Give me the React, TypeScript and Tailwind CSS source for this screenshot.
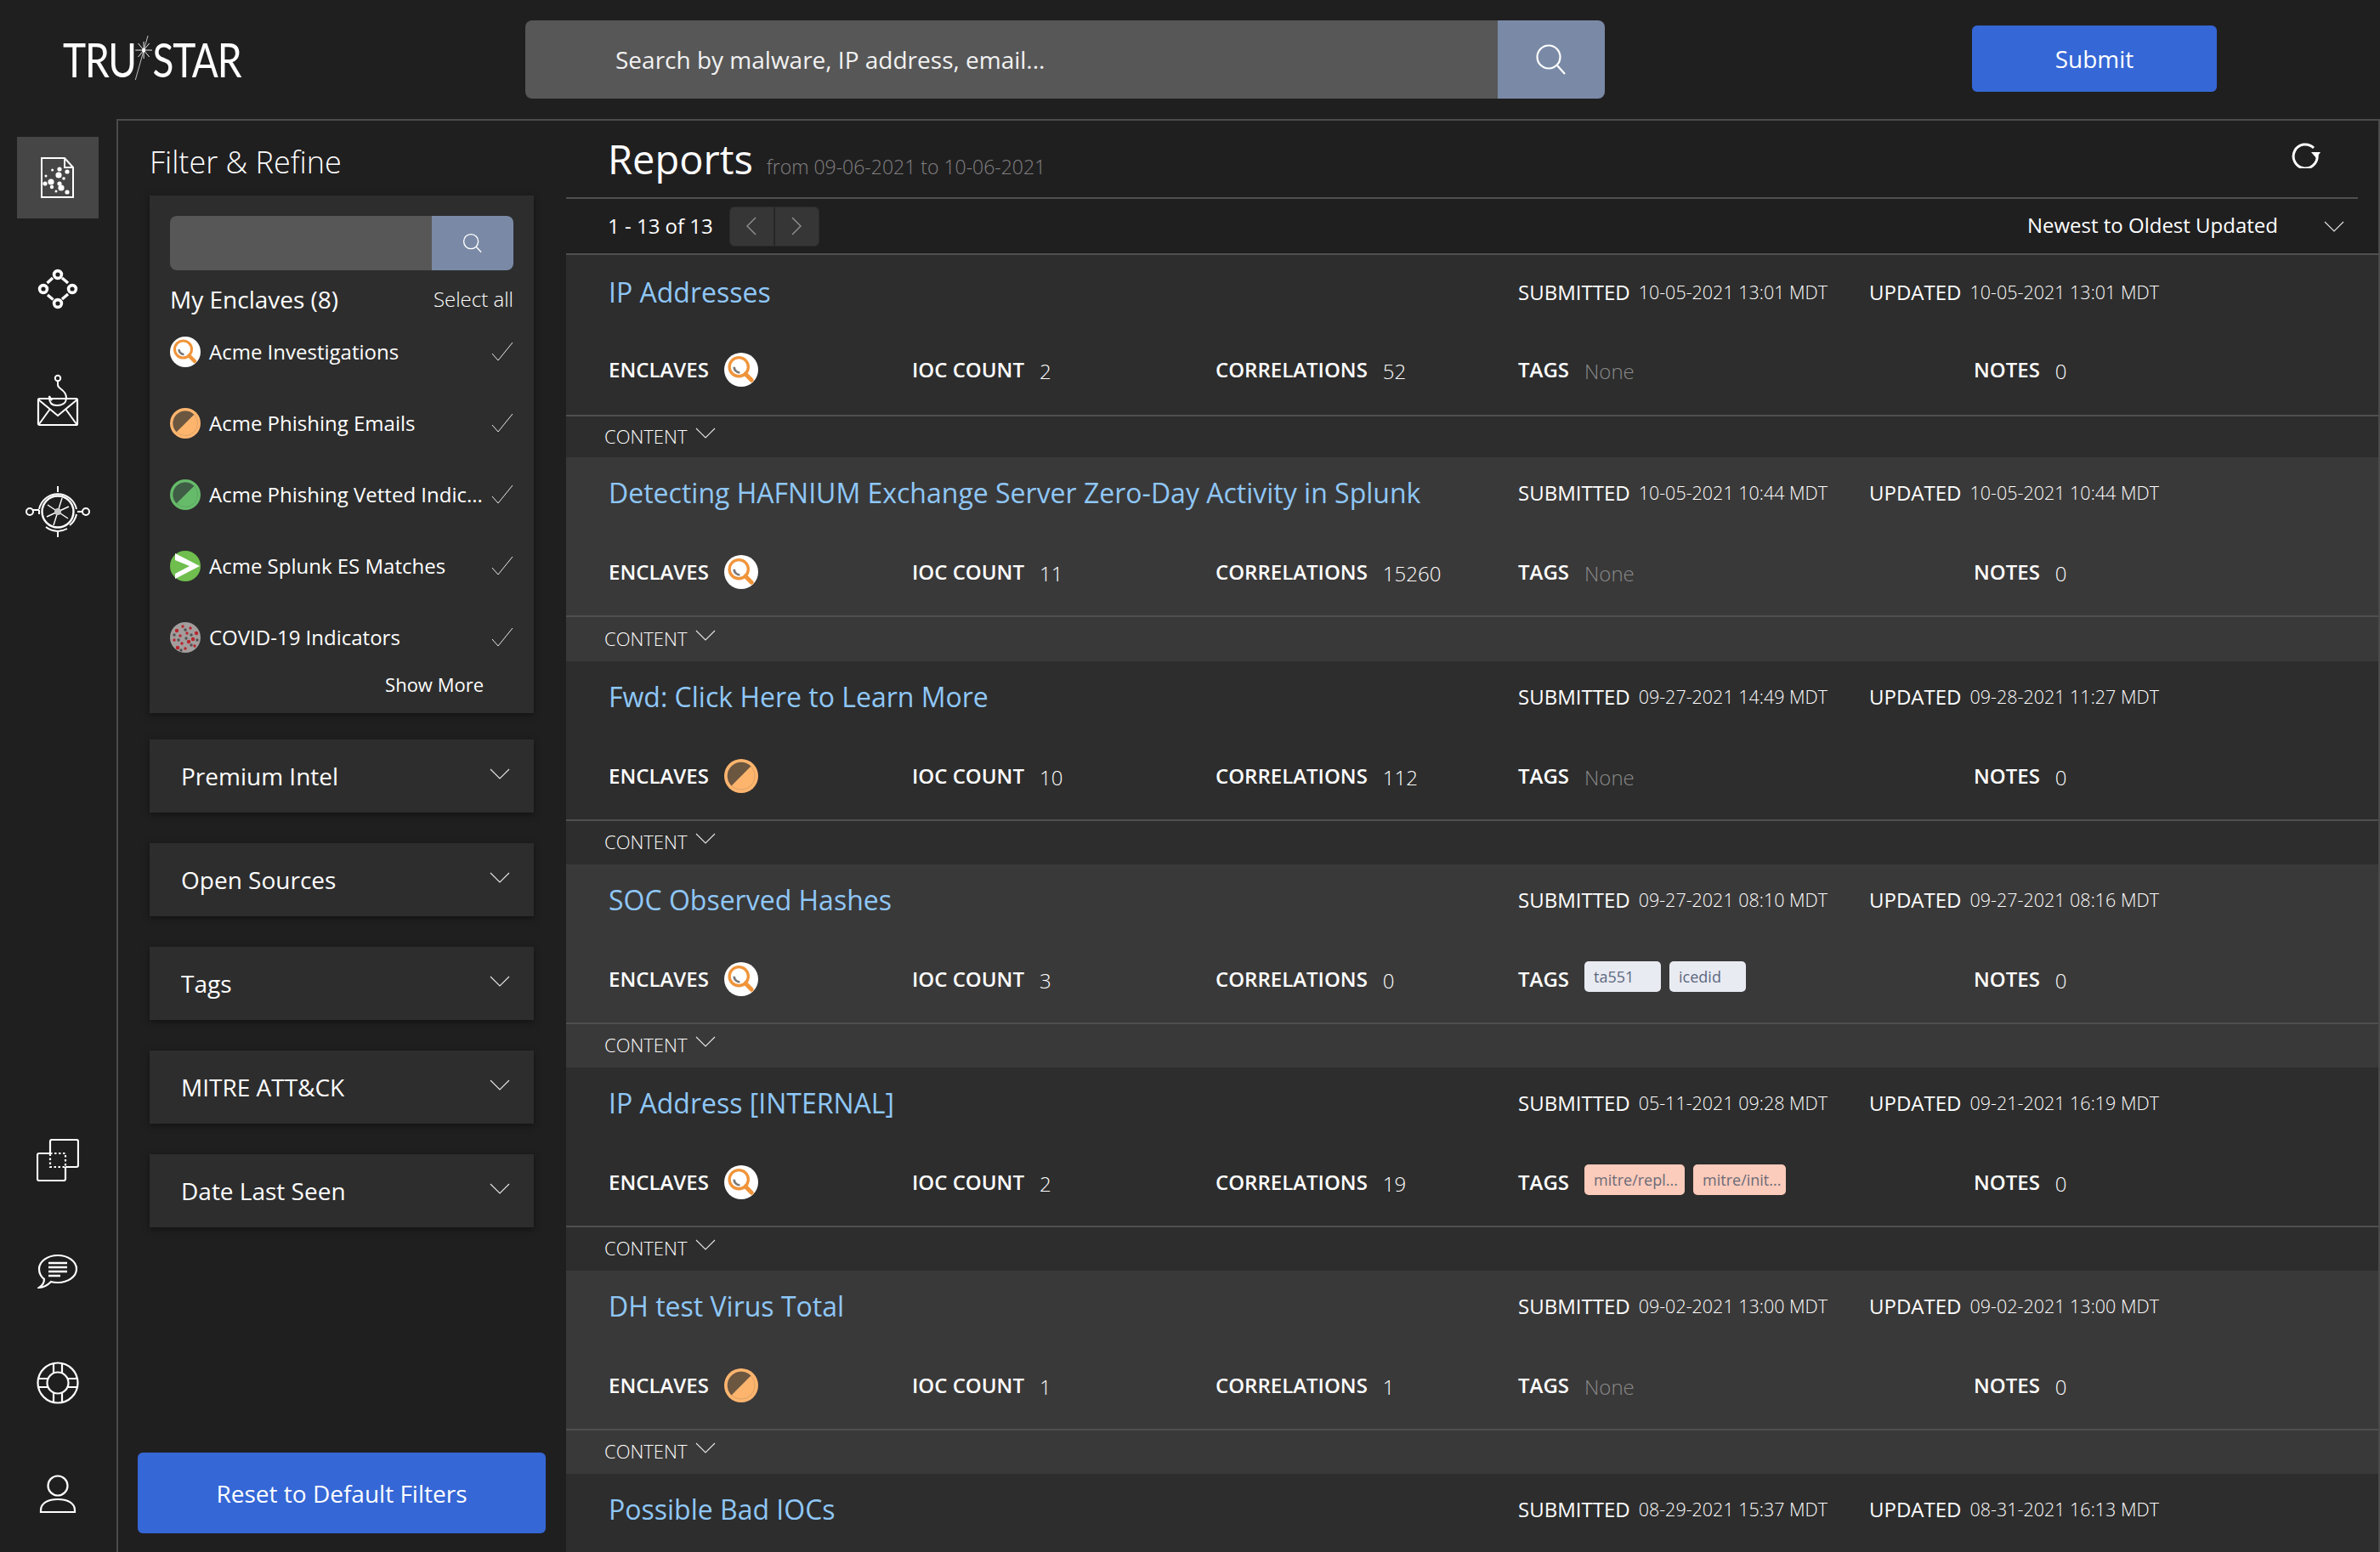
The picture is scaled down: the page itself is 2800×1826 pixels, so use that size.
import { ReactNode } from "react";

type EnclaveKind = "magnifier" | "orange" | "green" | "splunk" | "covid";

type Report = {
  title: string;
  submitted: string;
  updated: string;
  enclave?: EnclaveKind;
  iocCount?: string;
  correlations?: string;
  tags: { label: string; kind: "plain" | "mitre"; width: string }[];
};

const reports: Report[] = [
  { title: "IP Addresses", submitted: "10-05-2021 13:01 MDT", updated: "10-05-2021 13:01 MDT", enclave: "magnifier", iocCount: "2", correlations: "52", tags: [] },
  { title: "Detecting HAFNIUM Exchange Server Zero-Day Activity in Splunk", submitted: "10-05-2021 10:44 MDT", updated: "10-05-2021 10:44 MDT", enclave: "magnifier", iocCount: "11", correlations: "15260", tags: [] },
  { title: "Fwd: Click Here to Learn More", submitted: "09-27-2021 14:49 MDT", updated: "09-28-2021 11:27 MDT", enclave: "orange", iocCount: "10", correlations: "112", tags: [] },
  {
    title: "SOC Observed Hashes", submitted: "09-27-2021 08:10 MDT", updated: "09-27-2021 08:16 MDT", enclave: "magnifier", iocCount: "3", correlations: "0",
    tags: [{ label: "ta551", kind: "plain", width: "w-[90px]" }, { label: "icedid", kind: "plain", width: "w-[90px]" }],
  },
  {
    title: "IP Address [INTERNAL]", submitted: "05-11-2021 09:28 MDT", updated: "09-21-2021 16:19 MDT", enclave: "magnifier", iocCount: "2", correlations: "19",
    tags: [{ label: "mitre/repl...", kind: "mitre", width: "w-[118px]" }, { label: "mitre/init...", kind: "mitre", width: "w-[109px]" }],
  },
  { title: "DH test Virus Total", submitted: "09-02-2021 13:00 MDT", updated: "09-02-2021 13:00 MDT", enclave: "orange", iocCount: "1", correlations: "1", tags: [] },
  // last row runs off the bottom of the page, only its heading line is visible
  { title: "Possible Bad IOCs", submitted: "08-29-2021 15:37 MDT", updated: "08-31-2021 16:13 MDT", tags: [] },
];

const enclaves: { name: string; kind: EnclaveKind }[] = [
  { name: "Acme Investigations", kind: "magnifier" },
  { name: "Acme Phishing Emails", kind: "orange" },
  { name: "Acme Phishing Vetted Indic...", kind: "green" },
  { name: "Acme Splunk ES Matches", kind: "splunk" },
  { name: "COVID-19 Indicators", kind: "covid" },
];

const covidRed = [
  [8, 10], [15, 5], [24, 7], [31, 13], [12, 16], [20, 13], [27, 20], [5, 21], [14, 25], [22, 23], [18, 31], [29, 28], [9, 30],
];
const covidDark = [[18, 9], [10, 21], [25, 15], [19, 19], [25, 27], [13, 33], [5, 15], [32, 21]];

function EnclaveIcon({ kind, size }: { kind: EnclaveKind; size: number }) {
  if (kind === "magnifier") {
    return (
      <svg width={size} height={size} viewBox="0 0 36 36" className="shrink-0">
        <circle cx="18" cy="18" r="18" fill="#fff" />
        <circle cx="15.5" cy="15" r="10" fill="none" stroke="#f0943a" strokeWidth="3" />
        <path d="M10.500 15a6 6 0 0 0 6 6" fill="none" stroke="#77787a" strokeWidth="2.500" />
        <path d="M22.500 22.500l6.500 6.500" stroke="#f0943a" strokeWidth="4.500" strokeLinecap="round" />
      </svg>
    );
  }
  if (kind === "orange" || kind === "green") {
    const outer = kind === "orange" ? "#fdb56e" : "#66bb6a";
    const inner = kind === "orange" ? "#6b5640" : "#3f5c45";
    return (
      <svg width={size} height={size} viewBox="0 0 36 36" className="shrink-0">
        <circle cx="18" cy="18" r="18" fill={outer} />
        <circle cx="18" cy="18" r="14.500" fill="none" stroke={inner} strokeOpacity="0.4" strokeWidth="0.5" />
        <path d="M7.700 28.300A14.500 14.500 0 0 1 28.300 7.700Z" fill={inner} />
      </svg>
    );
  }
  if (kind === "splunk") {
    return (
      <svg width={size} height={size} viewBox="0 0 36 36" className="shrink-0">
        <circle cx="18" cy="18" r="18" fill="#6fbe4e" />
        <path d="M6 3l29 15-29 15v-6l17-9L6 11z" fill="#fff" />
      </svg>
    );
  }
  return (
    <svg width={size} height={size} viewBox="0 0 36 36" className="shrink-0">
      <circle cx="18" cy="18" r="18" fill="#a39d9d" />
      {covidDark.map(([x, y], i) => (
        <circle key={i} cx={x} cy={y} r="1.700" fill="#55504f" />
      ))}
      {covidRed.map(([x, y], i) => (
        <circle key={i} cx={x} cy={y} r={i % 3 === 0 ? 2.2 : 1.700} fill="#b9262c" />
      ))}
    </svg>
  );
}

function Chevron({ className }: { className?: string }) {
  return (
    <svg width="24" height="13" viewBox="0 0 24 13" fill="none" stroke="#e8e8e8" strokeWidth="1.1" className={className}>
      <path d="M1 1l11 11L23 1" />
    </svg>
  );
}

function SearchGlyph({ size }: { size: number }) {
  return (
    <svg width={size} height={size} viewBox="0 0 38 38" fill="none" stroke="#fff" strokeWidth="2.2">
      <circle cx="16" cy="16" r="13.5" />
      <path d="M26 26l9 10" />
    </svg>
  );
}

function NavItem({ children, active }: { children: ReactNode; active?: boolean }) {
  return (
    <div className="flex h-[131px] items-center justify-center">
      <div className={`flex h-[96px] w-[96px] items-center justify-center ${active ? "bg-[#464646]" : ""}`}>{children}</div>
    </div>
  );
}

const docDots = [
  [22, 14, 2.6], [31, 17, 2.6], [13.6, 15, 1.5], [21, 21, 3.6], [6, 22, 1.5], [27, 25, 1.8], [12, 29, 3.6],
  [22, 31, 2.6], [5, 31, 2.6], [13, 35, 2.2], [24, 36, 3.6], [18, 40, 1.5], [31, 41, 2.6],
];

function DocIcon() {
  return (
    <svg width="40" height="48" viewBox="0 0 40 48" fill="none" stroke="#fff" strokeWidth="2">
      <path d="M1 1h27l10 11v35H1z" />
      <path d="M28 1v11h10" />
      {docDots.map(([x, y, r], i) => (
        <circle key={i} cx={x} cy={y} r={r} fill="#fff" stroke="none" />
      ))}
    </svg>
  );
}

function NetworkIcon() {
  return (
    <svg width="48" height="48" viewBox="0 0 48 48" fill="none" stroke="#fff" strokeWidth="3.6">
      <circle cx="24" cy="7" r="4.4" />
      <circle cx="7" cy="24" r="4.4" />
      <circle cx="41" cy="24" r="4.4" />
      <circle cx="24" cy="41" r="4.4" />
      <path d="M29 11l7 6M18 11l-6.500 6M12 31l6.500 5.500M36 30l-7 6" strokeWidth="3.4" />
    </svg>
  );
}

function MailHookIcon() {
  return (
    <svg width="50" height="62" viewBox="0 0 50 62" fill="none" stroke="#fff" strokeWidth="2">
      <circle cx="25" cy="5" r="3.200" />
      <path d="M25 8v5c0 5 10 5 10 15 0 7-6 9-11 9-6 0-9-3-9-9l3 3-3-5" />
      <rect x="2" y="29" width="46" height="31" rx="1.500" strokeWidth="2.200" />
      <path d="M2 30l23 19 23-19M3 59l13-18M47 59L34 41" />
    </svg>
  );
}

function CompassIcon() {
  return (
    <svg width="78" height="64" viewBox="0 0 78 64" fill="none" stroke="#fff" strokeWidth="2">
      <circle cx="39" cy="32" r="18.500" strokeWidth="2.400" />
      <path d="M17 29a22.500 22.500 0 0 1 44 0M61 35a22.500 22.500 0 0 1-8 13M25 50a22.500 22.500 0 0 0 25 2" />
      <path d="M39 2v7M39 55v7M10 30h7M17 30v5M62 32h7" />
      <circle cx="6" cy="32" r="4" />
      <circle cx="72" cy="32" r="4" />
      <path d="M44 16l-10 32M27 24l24 16M26 38l26-12" strokeWidth="1.400" />
      <circle cx="39" cy="32" r="4" fill="#c8c8c8" stroke="none" />
    </svg>
  );
}

function CopyIcon() {
  return (
    <svg width="50" height="50" viewBox="0 0 50 50" fill="none" stroke="#fff" strokeWidth="2.200">
      <path d="M16 17V3a2 2 0 0 1 2-2h29a2 2 0 0 1 2 2v28a2 2 0 0 1-2 2H34" />
      <path d="M34 33v14a2 2 0 0 1-2 2H3a2 2 0 0 1-2-2V19a2 2 0 0 1 2-2h13" />
      <path d="M16 17h18v16H16z" strokeDasharray="2.500 2.500" />
    </svg>
  );
}

function ChatIcon() {
  return (
    <svg width="48" height="42" viewBox="0 0 48 42" fill="none" stroke="#fff" strokeWidth="2.200">
      <path d="M24 2c12 0 22 7 22 16s-10 16-22 16c-3 0-5 0-8-1-3 3-8 7-14 7 3-2 6-5 6-10C4 27 2 23 2 18 2 9 12 2 24 2z" />
      <path d="M13 11h22M13 16h22M13 21h22M13 26h14" strokeWidth="2.400" />
    </svg>
  );
}

function BuoyIcon() {
  return (
    <svg width="50" height="50" viewBox="0 0 50 50" fill="none" stroke="#fff" strokeWidth="2.200">
      <circle cx="25" cy="25" r="23.500" />
      <circle cx="25" cy="25" r="12.500" />
      <path d="M20 2v11M30 2v11M20 37v11M30 37v11M2 20h11M2 30h11M37 20h11M37 30h11" />
    </svg>
  );
}

function UserIcon() {
  return (
    <svg width="44" height="46" viewBox="0 0 44 46" fill="none" stroke="#fff" strokeWidth="2.200">
      <ellipse cx="22" cy="13" rx="11.500" ry="11.500" />
      <path d="M2 44v-2c0-9 9-13 20-13s20 4 20 13v2z" />
    </svg>
  );
}

function Logo() {
  return (
    <div className="flex origin-left scale-x-[0.82] items-center font-['Lato',sans-serif] text-[56px] leading-none font-normal tracking-[-1.5px] text-white">
      <span>TRU</span>
      <svg width="30" height="54" viewBox="0 0 30 54" className="mx-[-3px] -translate-y-[2px]" fill="none" stroke="#fff">
        <path d="M20 1L2 53" strokeWidth="0.8" />
        <path d="M2 18h24M14 8l0 20M6 10l16 16M22 10L6 26" strokeWidth="1" />
        <circle cx="14" cy="18" r="2.500" fill="#fff" stroke="none" />
      </svg>
      <span>STAR</span>
    </div>
  );
}

function Accordion({ label }: { label: string }) {
  return (
    <div className="flex h-[86px] w-[452px] items-center justify-between bg-[#2d2d2d] pr-[28px] pl-[37px] shadow-[0_2px_8px_rgba(0,0,0,0.45)]">
      <span className="text-[28px] text-white">{label}</span>
      <Chevron className="-translate-y-[3px]" />
    </div>
  );
}

function Field({ label, children, width }: { label: string; children: ReactNode; width: string }) {
  return (
    <div className={`flex items-center ${width}`}>
      <span className="mr-[18px] text-[24px] font-semibold text-white">{label}</span>
      {children}
    </div>
  );
}

function Value({ children }: { children: ReactNode }) {
  return <span className="translate-y-[2px] text-[24px] font-light text-white">{children}</span>;
}

function ReportRow({ report, index }: { report: Report; index: number }) {
  const first = index === 0;
  const rowHeight = first ? "h-[238px]" : index === 1 ? "h-[240px]" : "h-[239px]";
  return (
    <div className={`flex shrink-0 flex-col ${rowHeight} ${index % 2 === 0 ? "bg-[#2d2d2d]" : "bg-[#3a3939]"}`}>
      <div className={`flex items-center pl-[50px] ${first ? "h-[88px]" : "h-[84px]"}`}>
        <div className="w-[1070px] text-[32px] whitespace-nowrap text-[#8fc7f7]">{report.title}</div>
        <div className="flex w-[413px] items-center">
          <span className="mr-[10px] text-[24px] font-medium text-white">SUBMITTED</span>
          <span className="text-[21.5px] font-light text-white">{report.submitted}</span>
        </div>
        <div className="flex items-center">
          <span className="mr-[10px] text-[24px] font-medium text-white">UPDATED</span>
          <span className="text-[21.5px] font-light text-white">{report.updated}</span>
        </div>
      </div>
      {report.enclave && (
        <>
          <div className={`flex items-center pl-[50px] ${first ? "h-[100px] pb-[6px]" : "h-[102px]"}`}>
            <Field label="ENCLAVES" width="w-[357px]">
              <EnclaveIcon kind={report.enclave} size={40} />
            </Field>
            <Field label="IOC COUNT" width="w-[357px]">
              <Value>{report.iocCount}</Value>
            </Field>
            <Field label="CORRELATIONS" width="w-[356px]">
              <Value>{report.correlations}</Value>
            </Field>
            <Field label="TAGS" width="w-[536px]">
              {report.tags.length === 0 ? (
                <span className="translate-y-[2px] text-[24px] font-light text-[#8a8a8a]">None</span>
              ) : (
                <div className="flex -translate-y-[3px] gap-[10px]">
                  {report.tags.map((tag) => (
                    <span
                      key={tag.label}
                      className={`flex h-[36px] items-center rounded-[5px] pl-[11px] text-[18px] ${tag.width} ${
                        tag.kind === "mitre" ? "bg-[#fbcbbb] text-[#6b6b78]" : "bg-[#e9ebf2] text-[#5b6880]"
                      }`}
                    >
                      {tag.label}
                    </span>
                  ))}
                </div>
              )}
            </Field>
            <Field label="NOTES" width="w-[200px]">
              <Value>0</Value>
            </Field>
          </div>
          <div className="flex flex-1 items-center border-t-2 border-[#4f4f4f] pb-[2px] pl-[45px]">
            <span className="text-[22px] font-light text-white">CONTENT</span>
            <Chevron className="ml-[10px] -translate-y-[4px]" />
          </div>
        </>
      )}
    </div>
  );
}

export default function App() {
  return (
    <div className="flex h-[1826px] w-[2800px] flex-col overflow-hidden bg-[#201f20] font-['Open_Sans',sans-serif] text-white">
      <header className="flex h-[140px] shrink-0 items-center">
        <div className="w-[618px] pl-[74px]">
          <Logo />
        </div>
        <div className="flex h-[92px] w-[1270px] overflow-hidden rounded-[8px]">
          <div className="flex flex-1 items-center bg-[#575757] pl-[106px] text-[28px] text-[#f2f2f2]">
            Search by malware, IP address, email...
          </div>
          <div className="flex w-[126px] items-center justify-center bg-[#7a8aa6]">
            <SearchGlyph size={38} />
          </div>
        </div>
        <button className="ml-[432px] h-[78px] w-[288px] -translate-y-[1px] rounded-[6px] bg-[#3567d6] text-[28px] text-white">Submit</button>
      </header>

      <div className="flex min-h-0 flex-1">
        <nav className="flex w-[137px] shrink-0 flex-col pt-[3px] pr-[1px] pb-[3px]">
          <NavItem active>
            <DocIcon />
          </NavItem>
          <NavItem>
            <NetworkIcon />
          </NavItem>
          <NavItem>
            <MailHookIcon />
          </NavItem>
          <NavItem>
            <CompassIcon />
          </NavItem>
          <div className="mt-auto flex flex-col">
            <NavItem>
              <CopyIcon />
            </NavItem>
            <NavItem>
              <ChatIcon />
            </NavItem>
            <NavItem>
              <BuoyIcon />
            </NavItem>
            <NavItem>
              <UserIcon />
            </NavItem>
          </div>
        </nav>

        <div className="flex min-w-0 flex-1 border-t-2 border-l-2 border-[#4a4a4a]">
          <aside className="flex w-[527px] shrink-0 flex-col pb-[22px]">
            <h2 className="flex h-[88px] items-center pt-[10px] pl-[37px] text-[36px] font-light">Filter &amp; Refine</h2>
            <div className="ml-[37px] h-[609px] w-[452px] bg-[#2d2d2d] px-[24px] pt-[24px] shadow-[0_2px_8px_rgba(0,0,0,0.45)]">
              <div className="flex h-[64px] overflow-hidden rounded-[8px]">
                <div className="flex-1 bg-[#575757]" />
                <div className="flex w-[96px] items-center justify-center bg-[#7a8aa6]">
                  <SearchGlyph size={24} />
                </div>
              </div>
              <div className="mt-[14px] flex h-[40px] items-center justify-between">
                <span className="text-[28px]">My Enclaves (8)</span>
                <span className="text-[24px] font-light">Select all</span>
              </div>
              <div className="flex flex-col">
                {enclaves.map((enclave) => (
                  <div key={enclave.name} className="flex h-[84px] items-center">
                    <EnclaveIcon kind={enclave.kind} size={36} />
                    <span className="ml-[10px] w-[332px] text-[24px] whitespace-nowrap">{enclave.name}</span>
                    <svg width="26" height="24" viewBox="0 0 26 24" fill="none" stroke="#e8e8e8" strokeWidth="1" className="ml-auto">
                      <path d="M1 14l7 8L25 1" />
                    </svg>
                  </div>
                ))}
              </div>
              <div className="-mt-[3px] pr-[35px] text-right text-[22px]">Show More</div>
            </div>
            <div className="mt-[31px] ml-[37px] flex flex-col gap-[36px]">
              <Accordion label="Premium Intel" />
              <Accordion label="Open Sources" />
              <Accordion label="Tags" />
              <Accordion label="MITRE ATT&CK" />
              <Accordion label="Date Last Seen" />
            </div>
            <button className="mt-auto ml-[23px] h-[95px] w-[480px] rounded-[6px] bg-[#3567d6] text-[28px] text-white">
              Reset to Default Filters
            </button>
          </aside>

          <main className="flex min-w-0 flex-1 flex-col overflow-hidden border-r-2 border-[#4a4a4a]">
            <div className="mr-[24px] flex h-[92px] shrink-0 items-center border-b-2 border-[#4f4f4f] pr-[44px] pl-[49px]">
              <h1 className="text-[47px] leading-none">Reports</h1>
              <span className="mt-[18px] ml-[16px] text-[23px] font-light text-[#808080]">from 09-06-2021 to 10-06-2021</span>
              <svg width="36" height="32" viewBox="0 0 36 32" fill="none" stroke="#fff" strokeWidth="3" className="mt-[-10px] ml-auto">
                <path d="M28 8A14 14 0 1 0 32 16" />
                <path d="M25 13h11l-5 7z" fill="#fff" stroke="none" />
              </svg>
            </div>
            <div className="flex h-[66px] shrink-0 items-center border-b-2 border-[#4f4f4f] pr-[40px] pl-[49px]">
              <span className="text-[24px]">1 - 13 of 13</span>
              <div className="ml-[19px] flex h-[47px] w-[106px] overflow-hidden rounded-[6px] border border-[#2b2b2b] bg-[#363636]">
                <div className="flex flex-1 items-center justify-center border-r-2 border-[#262626]">
                  <svg width="12" height="22" viewBox="0 0 12 22" fill="none" stroke="#8d8d8d" strokeWidth="1.500">
                    <path d="M11 1L1 11l10 10" />
                  </svg>
                </div>
                <div className="flex flex-1 items-center justify-center">
                  <svg width="12" height="22" viewBox="0 0 12 22" fill="none" stroke="#8d8d8d" strokeWidth="1.500">
                    <path d="M1 1l10 10L1 21" />
                  </svg>
                </div>
              </div>
              <span className="ml-auto -translate-y-[1px] text-[24px]">Newest to Oldest Updated</span>
              <Chevron className="ml-[54px]" />
            </div>
            {reports.map((report, index) => (
              <ReportRow key={report.title} report={report} index={index} />
            ))}
          </main>
        </div>
      </div>
    </div>
  );
}
